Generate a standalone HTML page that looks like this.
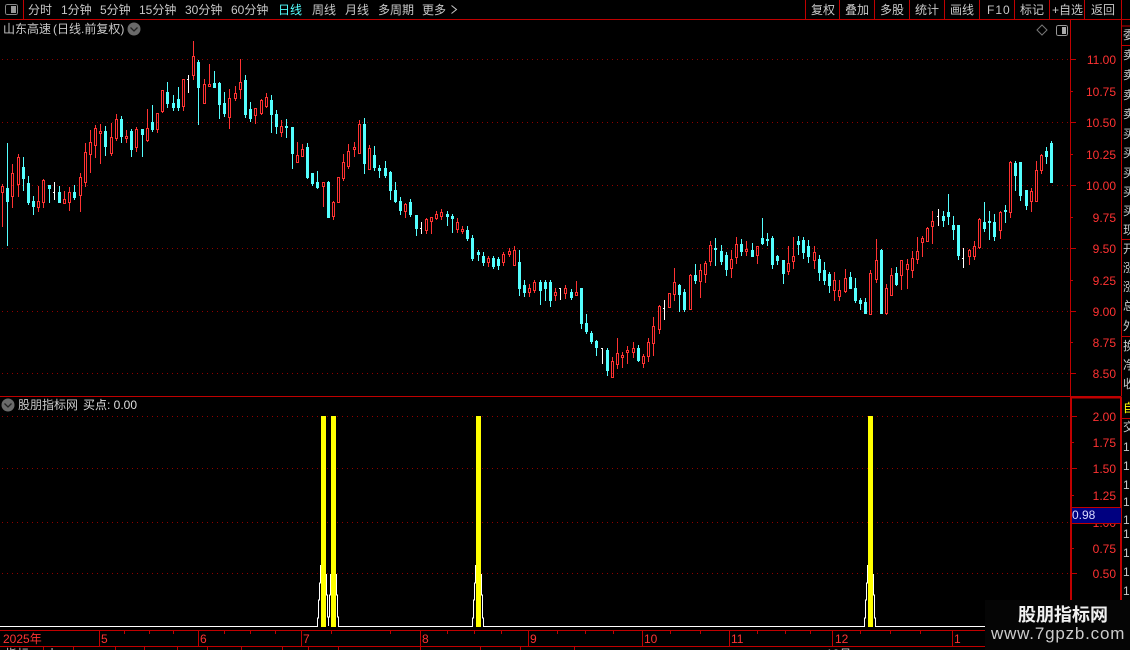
<!DOCTYPE html>
<html><head><meta charset="utf-8">
<style>
html,body{margin:0;padding:0;background:#000}
#r{position:relative;width:1130px;height:650px;overflow:hidden;background:#000;font:12px/16px "Liberation Sans","WenQuanYi Zen Hei","Noto Sans CJK SC",sans-serif;color:#c8c8c8}
#r span,#r b{position:absolute;white-space:nowrap;font-weight:normal}
svg{position:absolute;left:0;top:0}
.t{top:2px}
.y{color:#ff3232;left:1086px;width:30px;text-align:right;letter-spacing:0}
.m{color:#ff3232;top:631px}
.s{left:1123px;width:7px;overflow:hidden;color:#c8c8c8}
</style></head><body><div id="r">
<svg id="g" width="1130" height="650" shape-rendering="crispEdges">
<g stroke="#c00000" fill="none">
<path d="M0 19.5H1130M23.5 0V19M805.5 0V19M839.5 0V19M874.5 0V19M909.5 0V19M944.5 0V19M979.5 0V19M1014.5 0V19M1049.5 0V19M1084.5 0V19M1121.5 0V19"/>
<path d="M1070.5 20V396M1121.5 20V396M1122 26H1130M1122 45.500H1130M1122 239.500H1130M1122 336.500H1130M1122 418.500H1130"/>
<path d="M0 396.500H1121" />
<path d="M1070 397.500H1122M1071 397V600M1121 397V600" stroke-width="2"/>
<path d="M1071 59.500h5M1071 91.500h2M1071 122.500h5M1071 154.500h2M1071 185.500h5M1071 217.500h2M1071 248.500h5M1071 280.500h2M1071 311.500h5M1071 342.500h2M1071 373.500h5M1072 416.500h5M1072 442.500h2M1072 468.500h5M1072 495.500h2M1072 522.500h5M1072 548.500h2M1072 573.500h5"/>
<path d="M0 630.500H985M0 646.500H985M99.500 631V646M198.500 631V646M301.500 631V646M420.500 631V646M528.500 631V646M642.500 631V646M729.500 631V646M832.500 631V646M952.500 631V646M124.500 631v3M149.500 631v3M173.500 631v3M224.500 631v3M250.500 631v3M275.500 631v3M331.500 631v3M390.500 631v3M447.500 631v3M474.500 631v3M501.500 631v3M557.500 631v3M585.500 631v3M613.500 631v3M670.500 631v3M700.500 631v3M757.500 631v3M785.500 631v3M810.500 631v3M860.500 631v3M890.500 631v3M920.500 631v3M43.500 647v3M73.500 647v3M115.500 647v3M144.500 647v3M177.500 647v3M207.500 647v3M241.500 647v3M282.500 647v3M308.500 647v3M338.500 647v3M420.500 647v3M480.500 647v3M520.500 647v3M574.500 647v3"/>
</g>
<g stroke="#900000" stroke-dasharray="1 4" fill="none">
<path d="M2 59.500H1068M2 122.500H1068M2 185.500H1068M2 248.500H1068M2 311.500H1068M2 373.500H1068M2 416.500H1068M2 468.500H1068M2 522.500H1068M2 573.500H1068"/>
</g>
<g id="c"></g>
<g fill="#ffff00"><rect x="321" y="416" width="5" height="211"/><rect x="331" y="416" width="5" height="211"/><rect x="476" y="416" width="5" height="211"/><rect x="868" y="416" width="5" height="211"/></g>
<g fill="none" stroke="#fff"><path d="M0 626.500H317.500V618H318.500V600H319.500V583H320.500V565M326.500 574V595H327.500V617H328.500V626M330.500 574V595H329.500V617H328.500V626M336.500 574V595H337.500V617H338.500V626.500H472.500V618H473.500V600H474.500V583H475.500V565M481.500 574V595H482.500V618H483.500V626.500H864.500V618H865.500V600H866.500V583H867.500V565M873.500 574V595H874.500V618H875.500V626.500H985"/></g>
<g fill="none"><rect x="5.500" y="4.500" width="12" height="10" rx="2" stroke="#888"/><rect x="11" y="6" width="5" height="7" fill="#999"/>
<rect x="1056.500" y="25.500" width="11" height="10" rx="2" stroke="#999"/><rect x="1062" y="27" width="4" height="7" fill="#aaa"/></g>
<path d="M1042 25l5 5-5 5-5-5z" fill="none" stroke="#777" shape-rendering="auto"/>
<path d="M451.500 5.500l5 4-5 4" fill="none" stroke="#c8c8c8" shape-rendering="auto"/>
<g shape-rendering="auto"><circle cx="134" cy="29" r="6.500" fill="#6a6a6a"/><path d="M130.500 27.500l3.500 3.500 3.500-3.500" fill="none" stroke="#222" stroke-width="1.300"/>
<circle cx="8" cy="405" r="6.500" fill="#6a6a6a"/><path d="M4.500 403.500l3.500 3.500 3.500-3.500" fill="none" stroke="#222" stroke-width="1.300"/></g>
</svg>
<span class="t" style="left:28px">分时</span><span class="t" style="left:61px">1分钟</span><span class="t" style="left:100px">5分钟</span><span class="t" style="left:139px">15分钟</span><span class="t" style="left:185px">30分钟</span><span class="t" style="left:231px">60分钟</span><span class="t" style="left:278px;color:#54ffff">日线</span><span class="t" style="left:312px">周线</span><span class="t" style="left:345px">月线</span><span class="t" style="left:378px">多周期</span><span class="t" style="left:422px">更多</span>
<span class="t" style="left:811px">复权</span><span class="t" style="left:845px">叠加</span><span class="t" style="left:880px">多股</span><span class="t" style="left:915px">统计</span><span class="t" style="left:950px">画线</span><span class="t" style="left:987px;letter-spacing:1px">F10</span><span class="t" style="left:1020px">标记</span><span class="t" style="left:1052px">+自选</span><span class="t" style="left:1091px">返回</span>
<span style="left:3px;top:21px">山东高速</span><span style="left:53px;top:21px">(日线.前复权)</span>
<span style="left:18px;top:397px">股朋指标网</span><span style="left:83px;top:397px;color:#ddd">买点: 0.00</span>
<span class="y" style="top:52px">11.00</span><span class="y" style="top:84px">10.75</span><span class="y" style="top:115px">10.50</span><span class="y" style="top:147px">10.25</span><span class="y" style="top:178px">10.00</span><span class="y" style="top:210px">9.75</span><span class="y" style="top:241px">9.50</span><span class="y" style="top:273px">9.25</span><span class="y" style="top:304px">9.00</span><span class="y" style="top:335px">8.75</span><span class="y" style="top:366px">8.50</span>
<span class="y" style="top:409px">2.00</span><span class="y" style="top:435px">1.75</span><span class="y" style="top:461px">1.50</span><span class="y" style="top:488px">1.25</span><span class="y" style="top:515px">1.00</span><span class="y" style="top:541px">0.75</span><span class="y" style="top:566px">0.50</span>
<span style="left:1071px;top:507px;width:49px;height:15px;background:#000080;border:1px solid #c00000;color:#d8d8ff;line-height:15px">0.98</span>
<span class="m" style="left:3px">2025年</span><span class="m" style="left:101px">5</span><span class="m" style="left:200px">6</span><span class="m" style="left:303px">7</span><span class="m" style="left:422px">8</span><span class="m" style="left:530px">9</span><span class="m" style="left:644px">10</span><span class="m" style="left:731px">11</span><span class="m" style="left:835px">12</span><span class="m" style="left:954px">1</span>
<span style="left:5px;top:646px">指标</span><span style="left:46px;top:646px">小</span><span style="left:826px;top:646px">12月</span>
<span class="s" style="top:27px">委</span><span class="s" style="top:47px">卖</span><span class="s" style="top:67px">卖</span><span class="s" style="top:87px">卖</span><span class="s" style="top:106px">卖</span><span class="s" style="top:126px">买</span><span class="s" style="top:145px">买</span><span class="s" style="top:165px">买</span><span class="s" style="top:184px">买</span><span class="s" style="top:203px">买</span><span class="s" style="top:222px">现</span>
<span class="s" style="top:241px">开</span><span class="s" style="top:260px">涨</span><span class="s" style="top:279px">涨</span><span class="s" style="top:298px">总</span><span class="s" style="top:318px">外</span><span class="s" style="top:338px">换</span><span class="s" style="top:357px">净</span><span class="s" style="top:376px">收</span>
<span class="s" style="top:400px;color:#ffff00">自</span><span class="s" style="top:419px">交</span>
<span class="s" style="top:439px">1</span><span class="s" style="top:458px">1</span><span class="s" style="top:477px">1</span><span class="s" style="top:494px">1</span><span class="s" style="top:512px">1</span><span class="s" style="top:526px">1</span><span class="s" style="top:545px">1</span><span class="s" style="top:564px">1</span><span class="s" style="top:583px">1</span>
<span style="left:985px;top:600px;width:145px;height:50px;background:#050505"></span>
<b style="left:1018px;top:604px;font-size:18px;line-height:22px;font-weight:bold;color:#f0f0f0">股朋指标网</b>
<b style="left:991px;top:624px;font-size:17px;line-height:20px;letter-spacing:.8px;color:#ccc">www.7gpzb.com</b>
<script>
var D="r184,186,192,226 c143,188,201,245 r164,173,196,207 r154,157,184,196 c157,167,178,190 c176,183,202,204 c196,201,206,214 r186,201,207,211 r179,180,202,207 c185,185,188,202 w182,192,192,199 c186,192,202,202 r191,199,203,203 r187,192,202,210 c185,192,197,199 r173,177,195,211 r143,152,182,186 r130,142,154,172 r125,128,145,157 r124,131,133,163 c126,131,146,155 r123,137,153,155 r114,119,138,140 c116,119,136,142 r130,136,138,142 c129,131,149,156 r127,129,147,151 c129,129,134,156 r109,128,140,141 c105,122,129,131 r113,113,129,132 r90,90,111,112 c82,92,103,107 c95,103,107,110 c87,99,107,110 r79,79,106,110 w75,79,79,92 r41,56,75,79 c60,62,87,124 r79,84,103,103 r64,84,86,86 c71,83,87,87 c82,83,104,118 c92,103,113,116 r89,98,117,128 r86,93,98,100 r59,82,89,98 c75,80,114,117 c102,109,118,121 r108,108,115,123 r99,100,113,114 r93,97,106,107 c95,100,114,132 c110,114,126,133 r120,126,132,136 c119,126,127,137 c127,127,153,168 r142,155,162,162 r144,149,156,156 c143,147,177,178 c173,173,183,185 c171,182,187,188 r182,182,186,206 c181,182,217,217 r201,202,216,219 r177,177,202,202 r154,162,178,180 r144,151,166,168 r142,147,149,156 r120,124,153,153 c118,124,163,173 r145,148,169,169 c146,155,167,170 c165,168,170,177 c161,168,175,177 c171,172,190,199 c182,190,201,202 c197,201,210,214 r203,204,211,217 c199,202,214,216 c215,215,228,235 w222,228,228,233 r218,219,230,233 r217,217,221,233 r211,214,218,219 r209,212,216,219 c211,214,216,225 c214,216,218,232 r218,222,229,232 r226,229,231,233 c226,230,238,240 c235,238,258,260 c250,252,254,260 c252,256,262,265 r256,258,262,266 c256,258,266,268 c257,259,265,269 r252,254,262,265 r248,251,254,256 r246,250,265,265 c250,262,288,295 c280,285,292,296 r284,288,292,296 r280,282,290,292 c280,282,290,304 c280,282,288,300 c280,282,300,306 r288,292,295,300 w288,288,288,299 r285,288,293,298 c289,292,297,299 r281,292,295,295 c288,288,323,328 c314,323,331,333 c331,333,341,343 c340,341,347,355 w348,348,348,363 c348,350,370,375 r357,361,377,377 r338,353,364,368 r352,355,357,367 r346,350,352,363 r342,348,352,357 c345,348,360,361 r354,356,363,367 r338,342,356,361 r317,326,343,355 r305,306,329,333 w300,308,308,319 r293,293,307,307 r268,282,294,300 c284,285,294,311 c289,292,309,311 r274,275,309,309 c264,275,280,283 r264,270,281,297 r261,263,274,282 r241,245,261,265 c238,248,249,265 c245,251,261,264 c252,255,269,275 r250,259,268,277 r237,244,257,263 c239,244,251,255 r241,249,251,255 c243,250,256,256 r246,246,255,263 c218,238,243,244 c233,239,240,245 c236,238,264,268 c255,256,260,264 c260,260,273,283 r246,263,271,274 r237,256,261,268 c236,241,244,254 c237,240,252,258 c240,246,256,262 r246,252,260,268 c255,259,272,280 c262,270,280,284 c272,274,285,292 r272,280,290,300 r280,290,296,300 r269,278,291,292 c272,277,288,288 c278,288,300,302 c298,300,303,309 c298,302,313,313 r270,273,314,314 r239,260,279,282 c249,250,313,313 r284,288,313,314 r268,275,295,295 c267,273,284,285 r260,260,275,289 r259,264,269,288 r251,258,270,277 r237,251,259,263 r236,238,242,256 r227,228,241,241 r211,221,226,243 w209,216,216,225 c211,216,220,226 c194,212,216,224 c216,225,229,239 c225,225,255,259 w248,258,258,267 r249,250,256,264 r241,246,256,259 r218,219,247,248 c202,222,228,231 c211,221,222,239 c214,222,236,240 r211,212,230,238 c205,210,211,222 r161,162,212,217 c161,163,175,190 c162,162,195,200 c190,190,205,209 r188,191,201,211 r161,170,201,201 r154,155,170,173 c147,151,156,163 c141,143,182,182".split(" ");
var o="";
function R(x,y,w,h,f){if(h>0)o+='<rect x="'+x+'" y="'+y+'" width="'+w+'" height="'+h+'" fill="'+f+'"/>'}
for(var i=0;i<D.length;i++){var k=D[i][0],p=D[i].slice(1).split(",").map(Number),h=p[0],t=p[1],b=p[2],l=p[3],x=Math.floor(2.55+5.169*i);
var f=k=="r"?"#ff3232":k=="c"?"#54ffff":"#ffffff";
R(x,h,1,t-h,f);R(x,b,1,l-b+1,f);
if(k=="r"){R(x-1,t,3,1,f);R(x-1,b,3,1,f);R(x-1,t,1,b-t,f);R(x+1,t,1,b-t,f)}
else if(k=="c"){R(x-1,t,3,b-t+1,f)}
else{R(x-1,t,2,1,f);R(x,t,1,1,f)}}
document.getElementById("c").innerHTML=o;
</script>
</div></body></html>
